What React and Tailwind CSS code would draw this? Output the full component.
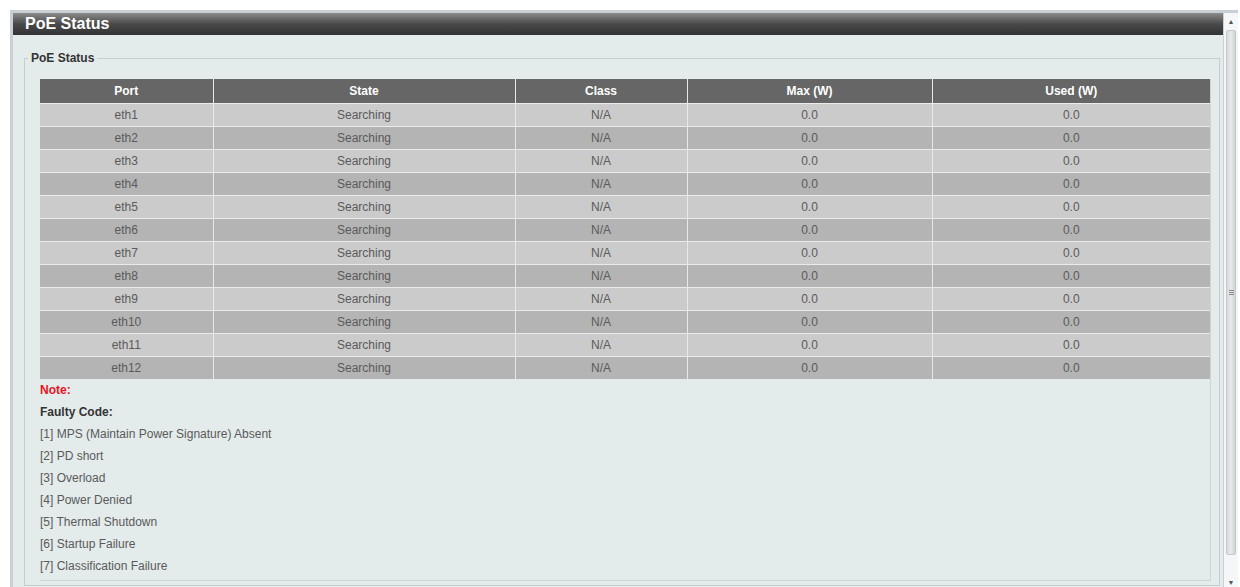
import React from 'react';

const ports = Array.from({ length: 12 }, (_, i) => ({
  port: `eth${i + 1}`,
  state: 'Searching',
  cls: 'N/A',
  max: '0.0',
  used: '0.0',
}));

const codes = [
  '[1] MPS (Maintain Power Signature) Absent',
  '[2] PD short',
  '[3] Overload',
  '[4] Power Denied',
  '[5] Thermal Shutdown',
  '[6] Startup Failure',
  '[7] Classification Failure',
];

function Scrollbar() {
  return (
    <div className="w-[15px] flex flex-col bg-[#f4f6f7] border-l border-[#c9d1d6]">
      <div className="h-[16px] flex items-center justify-center text-[7px] leading-none text-[#555]">▲</div>
      <div className="flex-1 mx-[2px] mt-[1px] mb-[22px] rounded-[2px] bg-gradient-to-r from-[#d8dcde] via-[#e8eaeb] to-[#cfd3d5] border border-[#c3c8cb] flex items-center justify-center">
        <div className="flex flex-col gap-[1px]">
          <div className="w-[5px] h-[1px] bg-[#888]" />
          <div className="w-[5px] h-[1px] bg-[#888]" />
          <div className="w-[5px] h-[1px] bg-[#888]" />
        </div>
      </div>
      <div className="h-[10px] flex items-center justify-center text-[7px] leading-none text-[#555]">▼</div>
    </div>
  );
}

export default function App() {
  return (
    <div className="w-[1240px] h-[587px] bg-white overflow-hidden pt-[10px] pl-[10px] pr-[2px]" style={{ fontFamily: '"Liberation Sans", Arial, sans-serif' }}>
      <div className="h-[577px] flex border-t-[3px] border-l-[3px] border-[#c8d0d6] bg-[#e3ebeb] overflow-hidden">
        <div className="flex-1 flex flex-col">
          <div className="h-[22px] shrink-0 flex items-center pl-[12px] bg-gradient-to-b from-[#8c8c8c] via-[#4a4a4a] to-[#333] text-white font-bold text-[16px] leading-none">
            PoE Status
          </div>
          <fieldset className="ml-[11px] mr-[3px] mt-[14px] border border-[#c6cfcf] pl-[15px] pr-[8px] pb-[4px]">
            <legend className="-ml-[12px] px-[3px] text-[12px] font-bold text-[#333]">PoE Status</legend>
            <div className="mt-[12px] border-r border-b border-[#cdd6d6]">
              <table className="w-full border-collapse text-[12px] text-center">
                <thead>
                  <tr className="bg-[#666] text-white font-bold h-[24px]">
                    <th className="w-[173px] border-r border-[#e8e8e8]">Port</th>
                    <th className="w-[302px] border-r border-[#e8e8e8]">State</th>
                    <th className="w-[172px] border-r border-[#e8e8e8]">Class</th>
                    <th className="w-[245px] border-r border-[#e8e8e8]">Max (W)</th>
                    <th>Used (W)</th>
                  </tr>
                </thead>
                <tbody className="text-[#5a5a5a]">
                  {ports.map((p, i) => (
                    <tr key={p.port} className={`h-[23px] border-t border-[#ebebeb] ${i % 2 === 0 ? 'bg-[#cbcbcb]' : 'bg-[#b4b4b4]'}`}>
                      <td className="border-r border-[#e8e8e8]">{p.port}</td>
                      <td className="border-r border-[#e8e8e8]">{p.state}</td>
                      <td className="border-r border-[#e8e8e8]">{p.cls}</td>
                      <td className="border-r border-[#e8e8e8]">{p.max}</td>
                      <td>{p.used}</td>
                    </tr>
                  ))}
                </tbody>
              </table>
              <div className="text-[12px] pb-[3px]">
                <div className="h-[22px] leading-[22px] font-bold text-[#e8141e]">Note:</div>
                <div className="h-[22px] leading-[22px] font-bold text-[#333]">Faulty Code:</div>
                {codes.map(c => (
                  <div key={c} className="h-[22px] leading-[22px] text-[#5a5a5a]">{c}</div>
                ))}
              </div>
            </div>
          </fieldset>
        </div>
        <Scrollbar />
      </div>
    </div>
  );
}
